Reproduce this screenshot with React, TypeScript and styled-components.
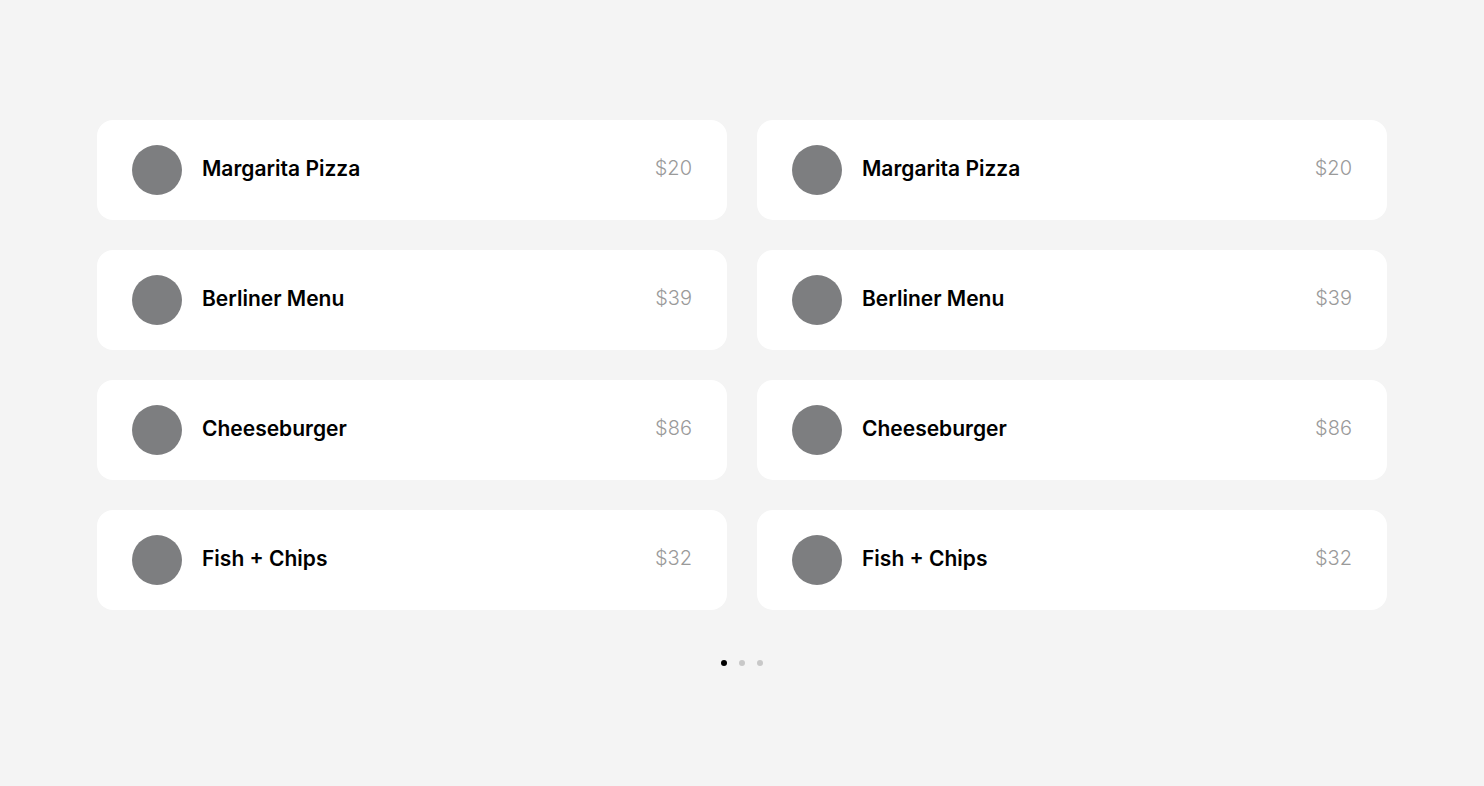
import React from 'react'
import styled, { createGlobalStyle } from 'styled-components'

const GlobalStyle = createGlobalStyle`
  html, body {
    margin: 0;
    padding: 0;
    background: #f4f4f4;
    font-family: Inter, "Noto Sans", sans-serif;
  }
`

const Page = styled.main`
  padding: 120px 97px 0;
  display: flex;
  flex-direction: column;
  align-items: center;
`

const Grid = styled.div`
  width: 100%;
  display: grid;
  grid-template-columns: repeat(2, 1fr);
  gap: 30px;
`

const Card = styled.div`
  height: 100px;
  box-sizing: border-box;
  background: #fff;
  border-radius: 16px;
  padding: 0 35px;
  display: flex;
  align-items: center;
  gap: 20px;
`

const Thumb = styled.div`
  width: 50px;
  height: 50px;
  border-radius: 50%;
  background: #7d7e80;
  flex-shrink: 0;
`

const Name = styled.h3`
  margin: 0 0 4px;
  flex: 1;
  font-size: 21px;
  font-weight: 600;
  color: #000;
`

const Price = styled.span`
  margin-bottom: 4px;
  font-size: 20px;
  font-weight: 300;
  color: #9a9a9a;
`

const Dots = styled.div`
  display: flex;
  gap: 12px;
  margin-top: 50px;
`

const Dot = styled.span<{ $active?: boolean }>`
  width: 6px;
  height: 6px;
  border-radius: 50%;
  background: ${p => (p.$active ? '#000' : '#c8c8c8')};
`

const items = [
  { title: 'Margarita Pizza', price: '$20' },
  { title: 'Berliner Menu', price: '$39' },
  { title: 'Cheeseburger', price: '$86' },
  { title: 'Fish + Chips', price: '$32' }
]

export default function App () {
  const cards = items.flatMap(item => [item, item])
  return (
    <>
      <GlobalStyle />
      <Page>
        <Grid>
          {cards.map(({ title, price }, i) => (
            <Card key={i}>
              <Thumb />
              <Name>{title}</Name>
              <Price>{price}</Price>
            </Card>
          ))}
        </Grid>
        <Dots>
          <Dot $active />
          <Dot />
          <Dot />
        </Dots>
      </Page>
    </>
  )
}
